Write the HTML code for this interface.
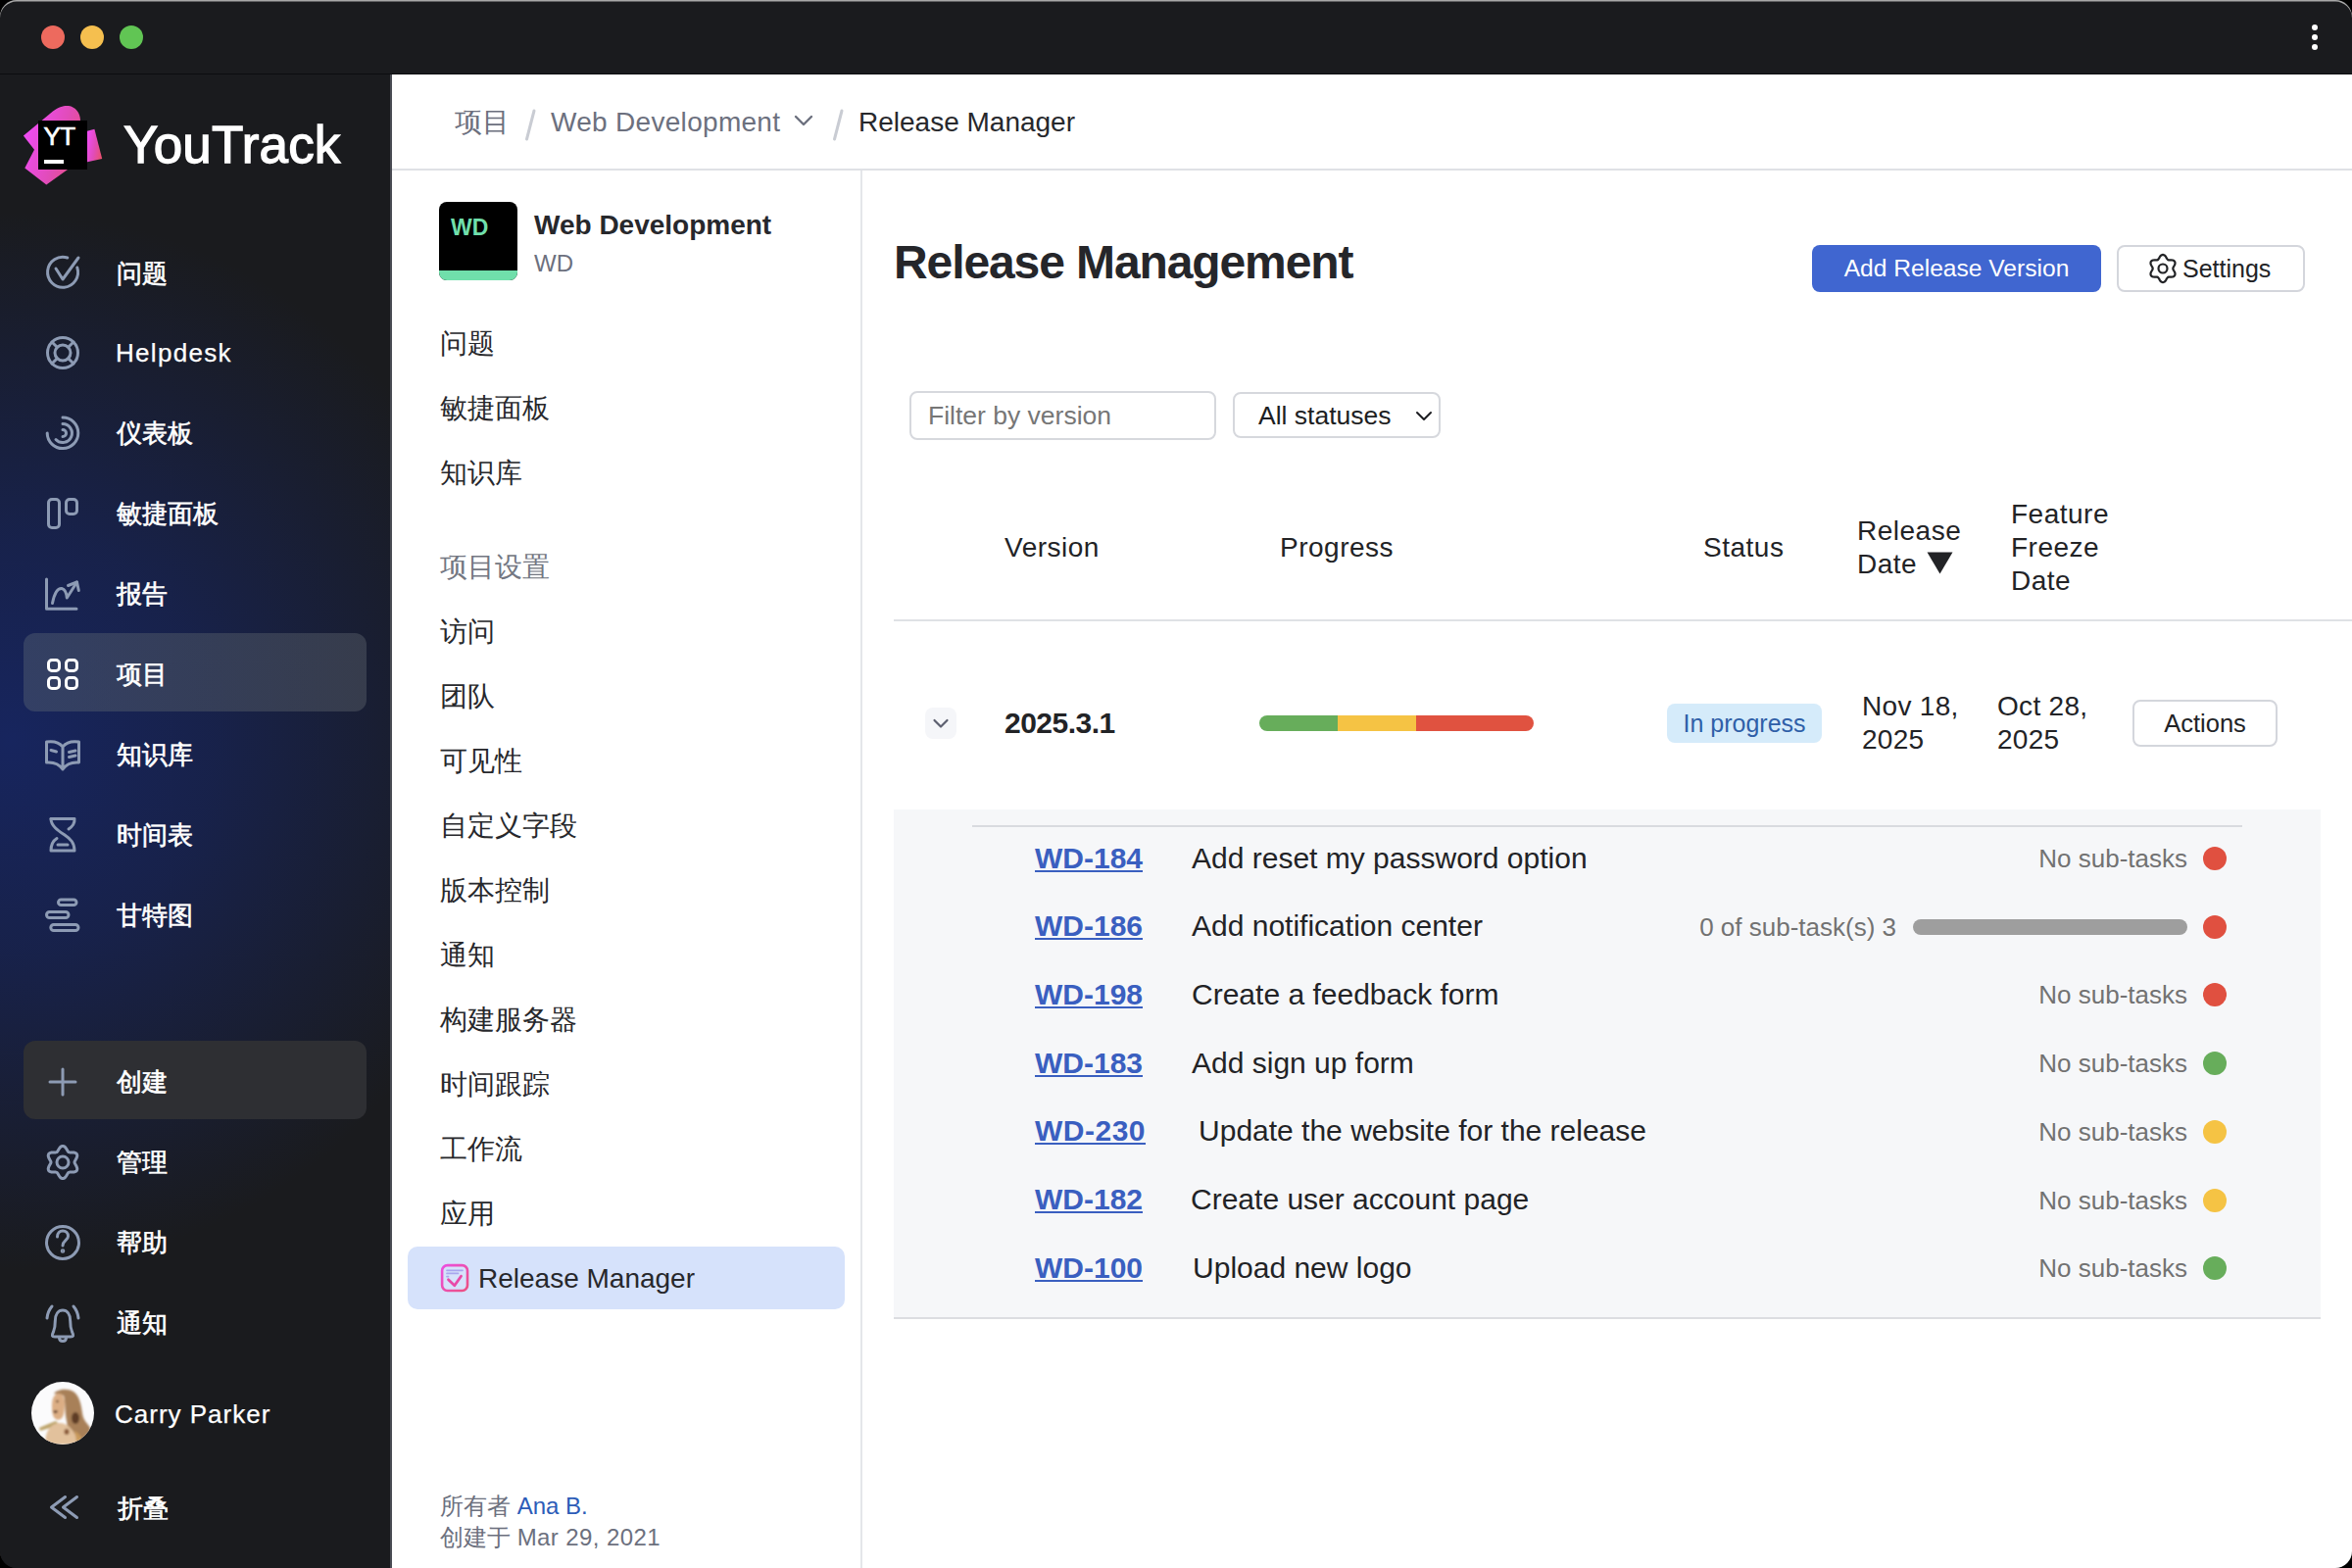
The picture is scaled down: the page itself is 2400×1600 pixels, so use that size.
<!DOCTYPE html>
<html><head><meta charset="utf-8">
<style>
*{box-sizing:border-box;margin:0;padding:0}
html,body{width:2400px;height:1600px;overflow:hidden;background:#000}
body{font-family:"Liberation Sans",sans-serif;position:relative}
.win{position:absolute;left:0;top:0;width:2400px;height:1600px;border-radius:17px;overflow:hidden;background:#1a1b1e;box-shadow:inset 0 1.6px 0 #a8a8a8}
.topline{position:absolute;left:0;top:0;width:2400px;height:2px;background:#a9a9a9;border-radius:18px 18px 0 0}
.abs{position:absolute;white-space:nowrap}
.tl{position:absolute;top:26px;width:24px;height:24px;border-radius:50%}
.side{position:absolute;left:0;top:76px;width:398px;height:1524px;
 background:radial-gradient(ellipse 520px 540px at 10px 680px, rgba(23,37,94,1) 0%, rgba(23,35,84,.82) 40%, rgba(26,27,30,0) 100%), #1a1b1e}
.nav{position:absolute;left:0;width:398px;height:80px;color:#fff;font-size:26.3px}
.nav .ic{position:absolute;left:45px;top:22px;width:36px;height:36px}
.nav .tx{position:absolute;left:119px;top:0;line-height:80px}
.content{position:absolute;left:400px;top:76px;width:2000px;height:1524px;background:#fff}
.sep{position:absolute;background:#dfe1e5}
.pn{position:absolute;white-space:nowrap;left:449px;font-size:27.8px;color:#27282c;line-height:40px}
.bc{font-size:28px;line-height:48px;margin-top:1px}
.nav .tx{-webkit-text-stroke:0.6px #fff}
.th{position:absolute;white-space:nowrap;font-size:28px;line-height:28px;color:#222326;letter-spacing:0.5px}
.row{position:absolute;left:1056px;height:30px;display:flex;white-space:nowrap;font-size:30px;line-height:30px}
.wid{font-weight:bold;color:#3a5fc0;text-decoration:underline;text-decoration-thickness:2px;text-underline-offset:2px;margin-right:50px}
.wt{color:#222326}
.st{font-size:26px;line-height:26px;color:#727272}
</style></head>
<body>
<div class="win">
  <div class="abs" style="left:0;top:75px;width:2400px;height:1px;background:#0c0d0f"></div>
  <div class="tl" style="left:42px;background:#ed6a5e"></div>
  <div class="tl" style="left:82px;background:#f5bf4f"></div>
  <div class="tl" style="left:122px;background:#61c554"></div>
  <!-- kebab -->
  <div class="abs" style="left:2359px;top:25px;width:6px;height:6px;border-radius:50%;background:#fff"></div>
  <div class="abs" style="left:2359px;top:35px;width:6px;height:6px;border-radius:50%;background:#fff"></div>
  <div class="abs" style="left:2359px;top:45px;width:6px;height:6px;border-radius:50%;background:#fff"></div>

  <div class="side"></div>
  <div class="abs" style="left:398px;top:76px;width:2px;height:1524px;background:#4a4c54"></div>
  <!-- highlight boxes -->
  <div class="abs" style="left:24px;top:646px;width:350px;height:80px;border-radius:12px;background:linear-gradient(90deg,rgba(70,82,108,.6),rgba(66,72,86,.72))"></div>
  <div class="abs" style="left:24px;top:1062px;width:350px;height:80px;border-radius:12px;background:#2e2f33"></div>
  <!-- logo -->
  <svg class="abs" style="left:20px;top:100px" width="90" height="95" viewBox="0 0 90 95">
    <defs><linearGradient id="lg" x1="0" y1="0.3" x2="1" y2="0.7"><stop offset="0" stop-color="#f04cf8"/><stop offset="0.55" stop-color="#e14cb8"/><stop offset="1" stop-color="#ea5070"/></linearGradient></defs>
    <path d="M3.9 38.5 L34 13.5 C40 8.5 46 7.5 50 8 C57 9 62 15 62 23 L62 40 L69 40 L69 73 L49 73 L27.3 88.5 L5.3 71.5 L15 52.7 Z" fill="url(#lg)"/>
    <path d="M68 34 L76.4 31.8 L84.2 62 L68 65.6 Z" fill="url(#lg)"/>
    <rect x="19" y="23" width="50" height="50" fill="#000"/>
    <rect x="25" y="63" width="20" height="4" fill="#fff"/>
    <text x="24.5" y="48" font-family="Liberation Sans" font-size="26" fill="#fff" stroke="#fff" stroke-width="0.7" letter-spacing="-0.6">YT</text>
  </svg>
  <div class="abs" style="left:126px;top:121px;font-size:53px;line-height:53px;color:#fff;letter-spacing:0.2px;-webkit-text-stroke:1.3px #fff">YouTrack</div>

  <!-- nav texts -->
  <div class="nav" style="top:239px"><span class="tx">问题</span></div>
  <div class="nav" style="top:320px"><span class="tx" style="left:118px;font-size:26px;letter-spacing:1.3px;-webkit-text-stroke:0.25px #fff">Helpdesk</span></div>
  <div class="nav" style="top:402px"><span class="tx">仪表板</span></div>
  <div class="nav" style="top:484px"><span class="tx">敏捷面板</span></div>
  <div class="nav" style="top:566px"><span class="tx">报告</span></div>
  <div class="nav" style="top:648px"><span class="tx">项目</span></div>
  <div class="nav" style="top:730px"><span class="tx">知识库</span></div>
  <div class="nav" style="top:812px"><span class="tx">时间表</span></div>
  <div class="nav" style="top:894px"><span class="tx">甘特图</span></div>
  <div class="nav" style="top:1064px"><span class="tx">创建</span></div>
  <div class="nav" style="top:1146px"><span class="tx">管理</span></div>
  <div class="nav" style="top:1228px"><span class="tx">帮助</span></div>
  <div class="nav" style="top:1310px"><span class="tx">通知</span></div>
  <div class="nav" style="top:1403px"><span class="tx" style="left:117px;font-size:26px;letter-spacing:1px;-webkit-text-stroke:0.25px #fff">Carry Parker</span></div>
  <div class="nav" style="top:1499px"><span class="tx" style="left:120px">折叠</span></div>

  <!-- avatar -->
  <svg class="abs" style="left:32px;top:1410px" width="64" height="64" viewBox="0 0 64 64">
    <defs><filter id="avb" x="-10%" y="-10%" width="120%" height="120%"><feGaussianBlur stdDeviation="1.1"/></filter><clipPath id="av"><circle cx="32" cy="32" r="32"/></clipPath>
      <linearGradient id="hair" x1="0" y1="0" x2="1" y2="1"><stop offset="0" stop-color="#b08a60"/><stop offset="1" stop-color="#6e4a30"/></linearGradient></defs>
    <g clip-path="url(#av)">
      <rect width="64" height="64" fill="#fbfbfc"/>
      <g filter="url(#avb)">
      <path d="M23 12 C26 8 36 6 43 10 C49 14 51 24 52 32 C53 40 58 43 60 47 C62 54 58 60 54 64 L30 64 C34 56 38 48 36 40 C34 32 35 20 33 14 Z" fill="#a88058"/>
      <path d="M25 40 C20 42 14 44 8 47 L9 50 C16 48 22 46 28 43 Z" fill="#bda46a"/>
      <path d="M21 24 C21 16 24 12 28 12 C32 12 34 16 34 22 C34 30 33 36 30 38 C27 40 23 38 22 34 C21 30 21 27 21 24 Z" fill="#dcae84"/>
      <path d="M22.5 29.5 L27 29.5 L26 31.8 L23 31.8 Z" fill="#4a2a1c"/>
      <circle cx="26.5" cy="20" r="1.2" fill="#5b3a28"/>
      <ellipse cx="45" cy="37" rx="4" ry="6" fill="#5e3c26"/>
      <path d="M18 48 C22 42 30 40 36 44 C42 48 46 54 48 64 L14 64 C14 58 15 52 18 48 Z" fill="#e2c19c"/>
      <ellipse cx="36" cy="51" rx="2.5" ry="3" fill="#8a5a38"/>
      <path d="M44 50 C48 52 52 56 54 64 L46 64 C46 58 45 54 44 50 Z" fill="#c99a5c"/>
    </g></g>
  </svg>

  <!-- icons -->
  <svg class="abs" style="left:0;top:0" width="400" height="1600" viewBox="0 0 400 1600" fill="none" stroke="#8d9bb4" stroke-width="3" stroke-linecap="round" stroke-linejoin="round">
    <!-- issues -->
    <path d="M68.8 263 A15.5 15.5 0 1 0 78.8 273"/>
    <path d="M57 274 L64 285 L80 263"/>
    <!-- helpdesk -->
    <circle cx="64" cy="360" r="15.5"/><circle cx="64" cy="360" r="8"/>
    <path d="M58.3 354.3 L53 349 M69.7 354.3 L75 349 M58.3 365.7 L53 371 M69.7 365.7 L75 371"/>
    <!-- dashboard -->
    <path d="M64 426 A15.8 15.8 0 1 1 48.2 442"/>
    <path d="M64 432.5 A9.5 9.5 0 1 1 57 448.5"/>
    <path d="M64 438.5 A3.5 3.5 0 0 1 64 445.5"/>
    <!-- agile -->
    <rect x="49.5" y="509.5" width="11" height="29" rx="3.5"/>
    <rect x="67.5" y="509.5" width="11" height="15" rx="3.5"/>
    <!-- reports -->
    <path d="M47.5 591 V621.2 H78"/>
    <path d="M53.5 615.5 Q56.5 600 63 600.5 Q67.5 601.5 68.3 610 L78.5 594"/>
    <path d="M69.5 597.5 L78.5 594 L80.3 602.5"/>
    <!-- projects -->
    <g stroke="#fff"><rect x="49.5" y="673.5" width="11" height="11" rx="3.5"/><rect x="67.5" y="673.5" width="11" height="11" rx="3.5"/><rect x="49.5" y="691.5" width="11" height="11" rx="3.5"/><rect x="67.5" y="691.5" width="11" height="11" rx="3.5"/></g>
    <!-- knowledge -->
    <path d="M64 762 C60 757 54 756 47.5 757 V778 C54 777.5 60 779 64 785 C68 779 74 777.5 80.5 778 V757 C74 756 68 757 64 762 V785"/>
    <path d="M52 765.5 L57.5 767 M70.5 767.5 L77 766 M70.5 772.5 L77 771"/>
    <!-- timesheet -->
    <path d="M52 835.5 H76 C76.5 841 73 844 70 846"/>
    <path d="M52 835.5 C52 843 60 848 66 852 C72 856 76 860 76 868 H52 C52 862 54 858 58 855.5"/>
    <path d="M59 862 H69"/>
    <!-- gantt -->
    <rect x="59.5" y="918" width="18.5" height="5.5" rx="2.75"/>
    <rect x="47.5" y="930.5" width="22.5" height="6" rx="3"/>
    <rect x="51.8" y="943.5" width="28.2" height="6" rx="3"/>
    <!-- plus -->
    <path d="M51 1104 H77 M64 1091 V1117"/>
    <!-- gear -->
    <path d="M76.0 1186.0 L76.3 1187.1 L77.0 1188.3 L77.8 1189.7 L78.5 1191.3 L78.8 1192.9 L78.4 1194.3 L77.3 1195.3 L75.8 1195.9 L74.1 1196.1 L72.5 1196.1 L71.1 1196.1 L70.0 1196.4 L69.2 1197.2 L68.5 1198.4 L67.7 1199.8 L66.7 1201.2 L65.4 1202.2 L64.0 1202.6 L62.6 1202.2 L61.3 1201.2 L60.3 1199.8 L59.5 1198.4 L58.8 1197.2 L58.0 1196.4 L56.9 1196.1 L55.5 1196.1 L53.9 1196.1 L52.2 1195.9 L50.7 1195.3 L49.6 1194.3 L49.2 1192.9 L49.5 1191.3 L50.2 1189.7 L51.0 1188.3 L51.7 1187.1 L52.0 1186.0 L51.7 1184.9 L51.0 1183.7 L50.2 1182.3 L49.5 1180.7 L49.2 1179.1 L49.6 1177.7 L50.7 1176.7 L52.2 1176.1 L53.9 1175.9 L55.5 1175.9 L56.9 1175.9 L58.0 1175.6 L58.8 1174.8 L59.5 1173.6 L60.3 1172.2 L61.3 1170.8 L62.6 1169.8 L64.0 1169.4 L65.4 1169.8 L66.7 1170.8 L67.7 1172.2 L68.5 1173.6 L69.2 1174.8 L70.0 1175.6 L71.1 1175.9 L72.5 1175.9 L74.1 1175.9 L75.8 1176.1 L77.3 1176.7 L78.4 1177.7 L78.8 1179.1 L78.5 1180.7 L77.8 1182.3 L77.0 1183.7 L76.3 1184.9 Z"/>
    <circle cx="64" cy="1186" r="6"/>
    <!-- help -->
    <circle cx="64" cy="1268" r="16.5"/>
    <path d="M58.5 1262 C58.5 1258 61 1256 64 1256 C67 1256 69.5 1258 69.5 1261.5 C69.5 1265.5 64 1266 64 1271"/>
    <circle cx="64" cy="1276.5" r="0.8" fill="#8d9bb4"/>
    <!-- bell -->
    <path d="M54.5 1359 C56 1355.5 56.3 1353 56.3 1348 C56.3 1341 59.5 1337 64 1337 C68.5 1337 71.7 1341 71.7 1348 C71.7 1353 72 1355.5 73.5 1359 C75.5 1363 75 1364 72 1364 H56 C53 1364 52.5 1363 54.5 1359 Z"/>
    <path d="M60.5 1365 C60.5 1367.5 62 1368.5 64 1368.5 C66 1368.5 67.5 1367.5 67.5 1365"/>
    <path d="M48 1345 C48.5 1340 50 1336.5 53 1333 M80 1345 C79.5 1340 78 1336.5 75 1333"/>
    <!-- collapse -->
    <path d="M66.5 1527.5 L52.5 1538 L66.5 1548.5 M78.5 1527.5 L64.5 1538 L78.5 1548.5"/>
  </svg>
  <div class="content"></div>
  <!-- breadcrumb -->
  <div class="sep" style="left:400px;top:172px;width:2000px;height:2px"></div>
  <div class="abs bc" style="left:464px;top:100px;color:#6c707e">项目</div>
  <svg class="abs" style="left:531px;top:109px" width="20" height="38"><path d="M6.5 33 L14 4" stroke="#c9ccd3" stroke-width="3" stroke-linecap="round"/></svg>
  <div class="abs bc" style="left:562px;top:100px;color:#6c707e;letter-spacing:0.3px">Web Development</div>
  <svg class="abs" style="left:808px;top:114px" width="24" height="18" viewBox="0 0 24 18" fill="none" stroke="#6c707e" stroke-width="2.4" stroke-linecap="round" stroke-linejoin="round"><path d="M4 5 L12 13 L20 5"/></svg>
  <svg class="abs" style="left:845px;top:109px" width="20" height="38"><path d="M6.5 33 L14 4" stroke="#c9ccd3" stroke-width="3" stroke-linecap="round"/></svg>
  <div class="abs bc" style="left:876px;top:100px;color:#27282c">Release Manager</div>

  <!-- project nav -->
  <div class="sep" style="left:878px;top:174px;width:2px;height:1427px;background:#e4e6ea"></div>
  <div class="abs" style="left:448px;top:206px;width:80px;height:80px;border-radius:8px;overflow:hidden;background:#000">
    <div class="abs" style="left:0;top:70px;width:80px;height:10px;background:#70dfab"></div>
    <div class="abs" style="left:12px;top:15px;font-size:23px;line-height:23px;font-weight:bold;color:#70dfab">WD</div>
  </div>
  <div class="abs" style="left:545px;top:216px;font-size:28px;line-height:28px;font-weight:bold;color:#27282c">Web Development</div>
  <div class="abs" style="left:545px;top:257px;font-size:24px;line-height:24px;color:#6c707e">WD</div>

  <div class="pn" style="top:330.5px">问题</div>
  <div class="pn" style="top:396.5px">敏捷面板</div>
  <div class="pn" style="top:462.5px">知识库</div>
  <div class="pn" style="top:558.5px;color:#737782">项目设置</div>
  <div class="pn" style="top:624.5px">访问</div>
  <div class="pn" style="top:690.5px">团队</div>
  <div class="pn" style="top:756.5px">可见性</div>
  <div class="pn" style="top:822.5px">自定义字段</div>
  <div class="pn" style="top:888.5px">版本控制</div>
  <div class="pn" style="top:954.5px">通知</div>
  <div class="pn" style="top:1020.5px">构建服务器</div>
  <div class="pn" style="top:1086.5px">时间跟踪</div>
  <div class="pn" style="top:1152.5px">工作流</div>
  <div class="pn" style="top:1218.5px">应用</div>
  <div class="abs" style="left:416px;top:1272px;width:446px;height:64px;border-radius:10px;background:#d6e2fb"></div>
  <svg class="abs" style="left:449px;top:1289px" width="30" height="30" viewBox="0 0 30 30" fill="none" stroke-linecap="round" stroke-linejoin="round">
    <defs><linearGradient id="rmg" x1="0" y1="0" x2="1" y2="1"><stop offset="0" stop-color="#ec4fe0"/><stop offset="1" stop-color="#ec5080"/></linearGradient></defs>
    <rect x="2.1" y="2.1" width="25.9" height="25.9" rx="5.5" stroke="url(#rmg)" stroke-width="2.6"/>
    <path d="M7 7.3 H23 M7 10.4 H18.5 M7 13.6 H8.5" stroke="#a8a6ee" stroke-width="1.7"/>
    <path d="M8.5 16.8 L14.8 22.8 L21.5 13.2" stroke="#e84aa8" stroke-width="2.8"/>
  </svg>
  <div class="pn" style="left:488px;top:1285px;font-size:28px">Release Manager</div>
  <div class="abs" style="left:449px;top:1522px;font-size:24px;line-height:30px;color:#6c707e">所有者 <span style="color:#2c5cb8">Ana B.</span></div>
  <div class="abs" style="left:449px;top:1554px;font-size:24px;line-height:30px;color:#6c707e">创建于 <span style="letter-spacing:0.4px">Mar 29, 2021</span></div>
  <!-- main -->
  <div class="abs" style="left:912px;top:244px;font-size:48px;line-height:48px;font-weight:bold;color:#25262a;letter-spacing:-1.1px">Release Management</div>
  <div class="abs btn" style="left:1849px;top:250px;width:295px;height:48px;background:#4066d0;border-radius:8px;color:#fff;font-size:24.6px;line-height:48px;text-align:center">Add Release Version</div>
  <div class="abs" style="left:2160px;top:250px;width:192px;height:48px;border:2px solid #d4d6dc;border-radius:8px"></div>
  <svg class="abs" style="left:2191px;top:258px" width="32" height="32" viewBox="0 0 32 32" fill="none" stroke="#222326" stroke-width="2.2" stroke-linejoin="round">
    <path d="M26.3 16.0 L26.5 16.9 L27.1 18.0 L27.8 19.2 L28.4 20.5 L28.5 21.9 L28.2 23.0 L27.3 23.9 L26.1 24.5 L24.6 24.6 L23.2 24.6 L22.1 24.6 L21.1 24.9 L20.5 25.6 L19.8 26.6 L19.2 27.8 L18.3 29.0 L17.2 29.8 L16.0 30.1 L14.8 29.8 L13.7 29.0 L12.8 27.8 L12.2 26.6 L11.5 25.6 L10.9 24.9 L9.9 24.6 L8.8 24.6 L7.4 24.6 L5.9 24.5 L4.7 23.9 L3.8 23.1 L3.5 21.9 L3.6 20.5 L4.2 19.2 L4.9 18.0 L5.5 16.9 L5.7 16.0 L5.5 15.1 L4.9 14.0 L4.2 12.8 L3.6 11.5 L3.5 10.1 L3.8 8.9 L4.7 8.1 L5.9 7.5 L7.4 7.4 L8.8 7.4 L9.9 7.4 L10.8 7.1 L11.5 6.4 L12.2 5.4 L12.8 4.2 L13.7 3.0 L14.8 2.2 L16.0 1.9 L17.2 2.2 L18.3 3.0 L19.2 4.2 L19.8 5.4 L20.5 6.4 L21.1 7.1 L22.1 7.4 L23.2 7.4 L24.6 7.4 L26.1 7.5 L27.3 8.1 L28.2 9.0 L28.5 10.1 L28.4 11.5 L27.8 12.8 L27.1 14.0 L26.5 15.1 Z"/>
    <circle cx="16" cy="16" r="4.5"/>
  </svg>
  <div class="abs" style="left:2227px;top:262px;font-size:25px;line-height:25px;color:#222326">Settings</div>

  <div class="abs" style="left:928px;top:399px;width:313px;height:50px;border:2px solid #d6d8dd;border-radius:8px"></div>
  <div class="abs" style="left:947px;top:411px;font-size:26.5px;line-height:26px;color:#767676">Filter by version</div>
  <div class="abs" style="left:1258px;top:400px;width:212px;height:47px;border:2px solid #d6d8dd;border-radius:8px"></div>
  <div class="abs" style="left:1284px;top:411px;font-size:26.5px;line-height:26px;color:#1d1e22">All statuses</div>
  <svg class="abs" style="left:1442px;top:417px" width="22" height="16" viewBox="0 0 22 16" fill="none" stroke="#1d1e22" stroke-width="2" stroke-linecap="round" stroke-linejoin="round"><path d="M4 4 L11 11 L18 4"/></svg>

  <div class="th" style="left:1025px;top:544.5px">Version</div>
  <div class="th" style="left:1306px;top:544.5px">Progress</div>
  <div class="th" style="left:1738px;top:544.5px">Status</div>
  <div class="th" style="left:1895px;top:527.5px">Release</div>
  <div class="th" style="left:1895px;top:561.5px">Date</div>
  <svg class="abs" style="left:1966px;top:563px" width="27" height="23" viewBox="0 0 27 23"><path d="M0.5 0.5 H26.5 L13.5 22.5 Z" fill="#222326"/></svg>
  <div class="th" style="left:2052px;top:510.5px">Feature</div>
  <div class="th" style="left:2052px;top:544.5px">Freeze</div>
  <div class="th" style="left:2052px;top:578.5px">Date</div>
  <div class="sep" style="left:912px;top:632px;width:1488px;height:2px"></div>

  <!-- version row -->
  <div class="abs" style="left:944px;top:722px;width:32px;height:32px;border-radius:8px;background:#f5f6f9"></div>
  <svg class="abs" style="left:944px;top:722px" width="32" height="32" viewBox="0 0 32 32" fill="none" stroke="#5d6070" stroke-width="2.2" stroke-linecap="round" stroke-linejoin="round"><path d="M9.5 13 L16 19.5 L22.5 13"/></svg>
  <div class="abs" style="left:1025px;top:723px;font-size:30px;line-height:30px;font-weight:bold;color:#222326;letter-spacing:-0.5px">2025.3.1</div>
  <div class="abs" style="left:1285px;top:730px;width:280px;height:16px;border-radius:8px;overflow:hidden;display:flex">
    <div style="width:80px;background:#67ad5b"></div><div style="width:80px;background:#f5c344"></div><div style="width:120px;background:#e05240"></div>
  </div>
  <div class="abs" style="left:1701px;top:718px;width:158px;height:40px;border-radius:8px;background:#d5ebfa;color:#2f5fa8;font-size:25px;line-height:40px;text-align:center">In progress</div>
  <div class="abs" style="left:1900px;top:704px;font-size:28px;line-height:34px;color:#222326;letter-spacing:0.3px">Nov 18,<br>2025</div>
  <div class="abs" style="left:2038px;top:704px;font-size:28px;line-height:34px;color:#222326;letter-spacing:0.3px">Oct 28,<br>2025</div>
  <div class="abs" style="left:2176px;top:714px;width:148px;height:48px;border:2px solid #d4d6dc;border-radius:8px;color:#222326;font-size:25.5px;line-height:44px;text-align:center">Actions</div>

  <!-- sub panel -->
  <div class="abs" style="left:912px;top:826px;width:1456px;height:520px;background:#f6f7f9;border-bottom:2px solid #dcdde1"></div>
  <div class="abs" style="left:992px;top:842px;width:1296px;height:2px;background:#d9dbdf"></div>
  <div class="row" style="top:860.6px"><a class="wid">WD-184</a><span class="wt">Add reset my password option</span></div>
  <div class="abs st" style="right:168px;top:863.0px">No sub-tasks</div>
  <div class="abs" style="left:2248px;top:864.0px;width:24px;height:24px;border-radius:50%;background:#e05040"></div>
  <div class="row" style="top:930.3px"><a class="wid">WD-186</a><span class="wt">Add notification center</span></div>
  <div class="abs st" style="right:465px;top:932.7px">0 of sub-task(s) 3</div>
  <div class="abs" style="left:1952px;top:937.7px;width:280px;height:16px;border-radius:8px;background:#9e9e9e"></div>
  <div class="abs" style="left:2248px;top:933.7px;width:24px;height:24px;border-radius:50%;background:#e05040"></div>
  <div class="row" style="top:1000.0px"><a class="wid">WD-198</a><span class="wt">Create a feedback form</span></div>
  <div class="abs st" style="right:168px;top:1002.4px">No sub-tasks</div>
  <div class="abs" style="left:2248px;top:1003.4px;width:24px;height:24px;border-radius:50%;background:#e05040"></div>
  <div class="row" style="top:1069.7px"><a class="wid">WD-183</a><span class="wt">Add sign up form</span></div>
  <div class="abs st" style="right:168px;top:1072.1px">No sub-tasks</div>
  <div class="abs" style="left:2248px;top:1073.1px;width:24px;height:24px;border-radius:50%;background:#67ad5b"></div>
  <div class="row" style="top:1139.4px"><a class="wid" style="margin-right:54px;letter-spacing:0.5px">WD-230</a><span class="wt">Update the website for the release</span></div>
  <div class="abs st" style="right:168px;top:1141.8px">No sub-tasks</div>
  <div class="abs" style="left:2248px;top:1142.8px;width:24px;height:24px;border-radius:50%;background:#f5c344"></div>
  <div class="row" style="top:1209.1px"><a class="wid" style="margin-right:49px">WD-182</a><span class="wt">Create user account page</span></div>
  <div class="abs st" style="right:168px;top:1211.5px">No sub-tasks</div>
  <div class="abs" style="left:2248px;top:1212.5px;width:24px;height:24px;border-radius:50%;background:#f5c344"></div>
  <div class="row" style="top:1278.8px"><a class="wid" style="margin-right:51px">WD-100</a><span class="wt">Upload new logo</span></div>
  <div class="abs st" style="right:168px;top:1281.2px">No sub-tasks</div>
  <div class="abs" style="left:2248px;top:1282.2px;width:24px;height:24px;border-radius:50%;background:#67ad5b"></div>
</div>
</body></html>
